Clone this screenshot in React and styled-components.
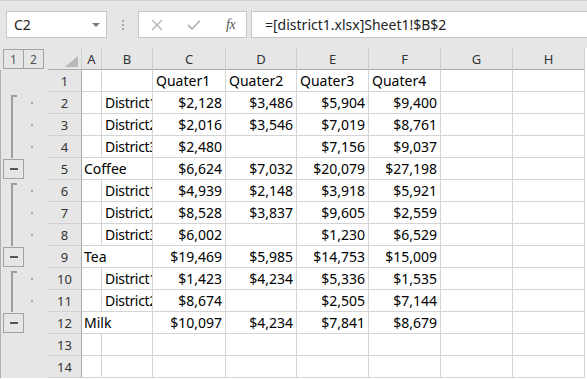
import React from 'react';
import styled, { createGlobalStyle } from 'styled-components';

const GlobalStyle = createGlobalStyle`
  html, body {
    margin: 0;
    padding: 0;
    background: #ffffff;
  }
  body {
    font-family: "Noto Sans", "Open Sans", sans-serif;
  }
`

const Window = styled.div`
  width: 587px;
  height: 379px;
  overflow: hidden;
  background: #e6e6e6;
  display: flex;
  flex-direction: column;
`

const Toolbar = styled.div`
  height: 48px;
  box-sizing: border-box;
  border-top: 1px solid #d2d2d2;
  padding: 10px 0 0 6px;
  display: flex;
  align-items: flex-start;
  flex-shrink: 0;
`

const NameBox = styled.div`
  width: 101px;
  height: 27px;
  box-sizing: border-box;
  background: #fff;
  border: 1px solid #c6c6c6;
  display: flex;
  align-items: center;
  justify-content: space-between;
  padding: 0 6px 0 7px;
  font-size: 14px;
  color: #222;
`

const Caret = styled.span`
  width: 0;
  height: 0;
  border-left: 4px solid transparent;
  border-right: 4px solid transparent;
  border-top: 4px solid #7a7a7a;
`

const Grip = styled.div`
  width: 31px;
  height: 27px;
  display: flex;
  flex-direction: column;
  align-items: center;
  justify-content: center;
  gap: 2px;

  span {
    width: 2px;
    height: 2px;
    background: #a6a6a6;
  }
`

const FormulaTools = styled.div`
  width: 109px;
  height: 27px;
  box-sizing: border-box;
  background: #fff;
  border: 1px solid #c6c6c6;
  display: flex;
  align-items: center;
  padding-left: 12px;
  gap: 24px;
`

const Fx = styled.span`
  font-family: "Liberation Serif", "DejaVu Serif", serif;
  font-style: italic;
  font-size: 14px;
  color: #555;
  letter-spacing: -0.5px;
  margin-left: 1px;
`

const FormulaInput = styled.div`
  flex: 1;
  margin-left: 4px;
  height: 27px;
  box-sizing: border-box;
  background: #fff;
  border: 1px solid #c6c6c6;
  border-right: none;
  display: flex;
  align-items: center;
  padding-left: 13px;
  font-size: 14px;
  color: #222;
  white-space: nowrap;
`

const Sheet = styled.div`
  flex: 1;
  background: #fff;
  display: grid;
  grid-template-columns: 48px 34px 20px 51px 73px 71px 72px 72px 72px 72px;
  grid-auto-rows: 22px;
`

const LevelCell = styled.div`
  background: #e6e6e6;
  display: flex;
  padding: 1px 0 0 3px;
`

const LevelButton = styled.div`
  width: 21px;
  height: 20px;
  box-sizing: border-box;
  border: 1px solid #a3a3a3;
  margin-right: -1px;
  display: flex;
  align-items: center;
  justify-content: center;
  font-size: 12px;
  color: #555;
`

const Corner = styled.div`
  position: relative;
  background: #e6e6e6;
  box-sizing: border-box;
  border-right: 1px solid #d0d0d0;
  border-bottom: 1px solid #ababab;

  &::after {
    content: "";
    position: absolute;
    right: 3px;
    bottom: 2px;
    width: 0;
    height: 0;
    border-left: 13px solid transparent;
    border-bottom: 11px solid #b9b9b9;
  }
`

const ColHeader = styled.div`
  background: #e6e6e6;
  box-sizing: border-box;
  border-right: 1px solid #d0d0d0;
  border-bottom: 1px solid #ababab;
  display: flex;
  align-items: center;
  justify-content: center;
  font-size: 13px;
  color: #333;
`

const OutlineCell = styled.div`
  position: relative;
  background: #e6e6e6;
  box-sizing: border-box;
  border-left: 1px solid #b0b0b0;
  padding: 1px 0 0 2px;

  &::before {
    content: ${(p) => (p.$line ? '""' : 'none')};
    position: absolute;
    left: 10px;
    top: ${(p) => (p.$line === 'start' ? '3px' : '0')};
    bottom: 0;
    width: 2px;
    background: #9e9e9e;
  }

  &::after {
    content: ${(p) => (p.$line === 'start' ? '""' : 'none')};
    position: absolute;
    left: 10px;
    top: 3px;
    width: 6px;
    height: 2px;
    background: #9e9e9e;
  }
`

const Dot = styled.span`
  position: absolute;
  left: 30px;
  top: 10px;
  width: 2px;
  height: 2px;
  background: #a8a8a8;
`

const MinusButton = styled.div`
  width: 21px;
  height: 20px;
  box-sizing: border-box;
  border: 1px solid #a3a3a3;
  display: flex;
  align-items: center;
  justify-content: center;

  &::before {
    content: "";
    width: 8px;
    height: 2px;
    background: #555;
  }
`

const RowHeader = styled.div`
  background: #e6e6e6;
  box-sizing: border-box;
  border-right: 1px solid #ababab;
  border-bottom: 1px solid #d0d0d0;
  display: flex;
  align-items: center;
  justify-content: center;
  font-size: 13px;
  color: #333;
`

const Cell = styled.div`
  position: relative;
  box-sizing: border-box;
  border-right: ${(p) => (p.$spill ? 'none' : '1px solid #d4d4d4')};
  border-bottom: 1px solid #d4d4d4;
  padding: 0 3px 0 ${(p) => (p.$spill ? '2px' : '3px')};
  font-size: 14px;
  line-height: 21px;
  letter-spacing: ${(p) => (p.$tight ? '-0.3px' : 'normal')};
  color: #000;
  white-space: nowrap;
  overflow: ${(p) => (p.$spill ? 'visible' : 'hidden')};
  text-align: ${(p) => (p.$num ? 'right' : 'left')};
  z-index: ${(p) => (p.$spill ? 1 : 0)};
`

const XIcon = () => (
  <svg width="12" height="12" viewBox="0 0 12 12">
    <path d="M1 1 L11 11 M11 1 L1 11" stroke="#b5b5b5" strokeWidth="1.4" fill="none" />
  </svg>
)

const CheckIcon = () => (
  <svg width="14" height="12" viewBox="0 0 14 12">
    <path d="M1 6 L5 10 L13 1.5" stroke="#b5b5b5" strokeWidth="1.8" fill="none" />
  </svg>
)

const rows = [
  { n: 1, a: '', b: '', v: ['Quater1', 'Quater2', 'Quater3', 'Quater4'], text: true },
  { n: 2, b: 'District1', v: ['$2,128', '$3,486', '$5,904', '$9,400'], line: 'start' },
  { n: 3, b: 'District2', v: ['$2,016', '$3,546', '$7,019', '$8,761'], line: 'mid' },
  { n: 4, b: 'District3', v: ['$2,480', '', '$7,156', '$9,037'], line: 'mid' },
  { n: 5, a: 'Coffee', v: ['$6,624', '$7,032', '$20,079', '$27,198'], sum: true },
  { n: 6, b: 'District1', v: ['$4,939', '$2,148', '$3,918', '$5,921'], line: 'start' },
  { n: 7, b: 'District2', v: ['$8,528', '$3,837', '$9,605', '$2,559'], line: 'mid' },
  { n: 8, b: 'District3', v: ['$6,002', '', '$1,230', '$6,529'], line: 'mid' },
  { n: 9, a: 'Tea', v: ['$19,469', '$5,985', '$14,753', '$15,009'], sum: true },
  { n: 10, b: 'District1', v: ['$1,423', '$4,234', '$5,336', '$1,535'], line: 'start' },
  { n: 11, b: 'District2', v: ['$8,674', '', '$2,505', '$7,144'], line: 'mid' },
  { n: 12, a: 'Milk', v: ['$10,097', '$4,234', '$7,841', '$8,679'], sum: true },
  { n: 13, v: ['', '', '', ''] },
  { n: 14, v: ['', '', '', ''] },
]

const columns = ['A', 'B', 'C', 'D', 'E', 'F', 'G', 'H']

const App = () => (
  <Window>
    <GlobalStyle />
    <Toolbar>
      <NameBox>
        C2
        <Caret />
      </NameBox>
      <Grip>
        <span />
        <span />
        <span />
      </Grip>
      <FormulaTools>
        <XIcon />
        <CheckIcon />
        <Fx>fx</Fx>
      </FormulaTools>
      <FormulaInput>=[district1.xlsx]Sheet1!$B$2</FormulaInput>
    </Toolbar>

    <Sheet>
      <LevelCell>
        <LevelButton>1</LevelButton>
        <LevelButton>2</LevelButton>
      </LevelCell>
      <Corner />
      {columns.map((c) => (
        <ColHeader key={c}>{c}</ColHeader>
      ))}

      {rows.map((r) => (
        <React.Fragment key={r.n}>
          <OutlineCell $line={r.line}>
            {r.line && <Dot />}
            {r.sum && <MinusButton />}
          </OutlineCell>
          <RowHeader>{r.n}</RowHeader>
          <Cell $spill={!!r.a}>{r.a}</Cell>
          <Cell $tight>{r.b}</Cell>
          {r.v.map((val, i) => (
            <Cell key={i} $num={!r.text}>
              {val}
            </Cell>
          ))}
          <Cell />
          <Cell />
        </React.Fragment>
      ))}
    </Sheet>
  </Window>
)

export default App;
